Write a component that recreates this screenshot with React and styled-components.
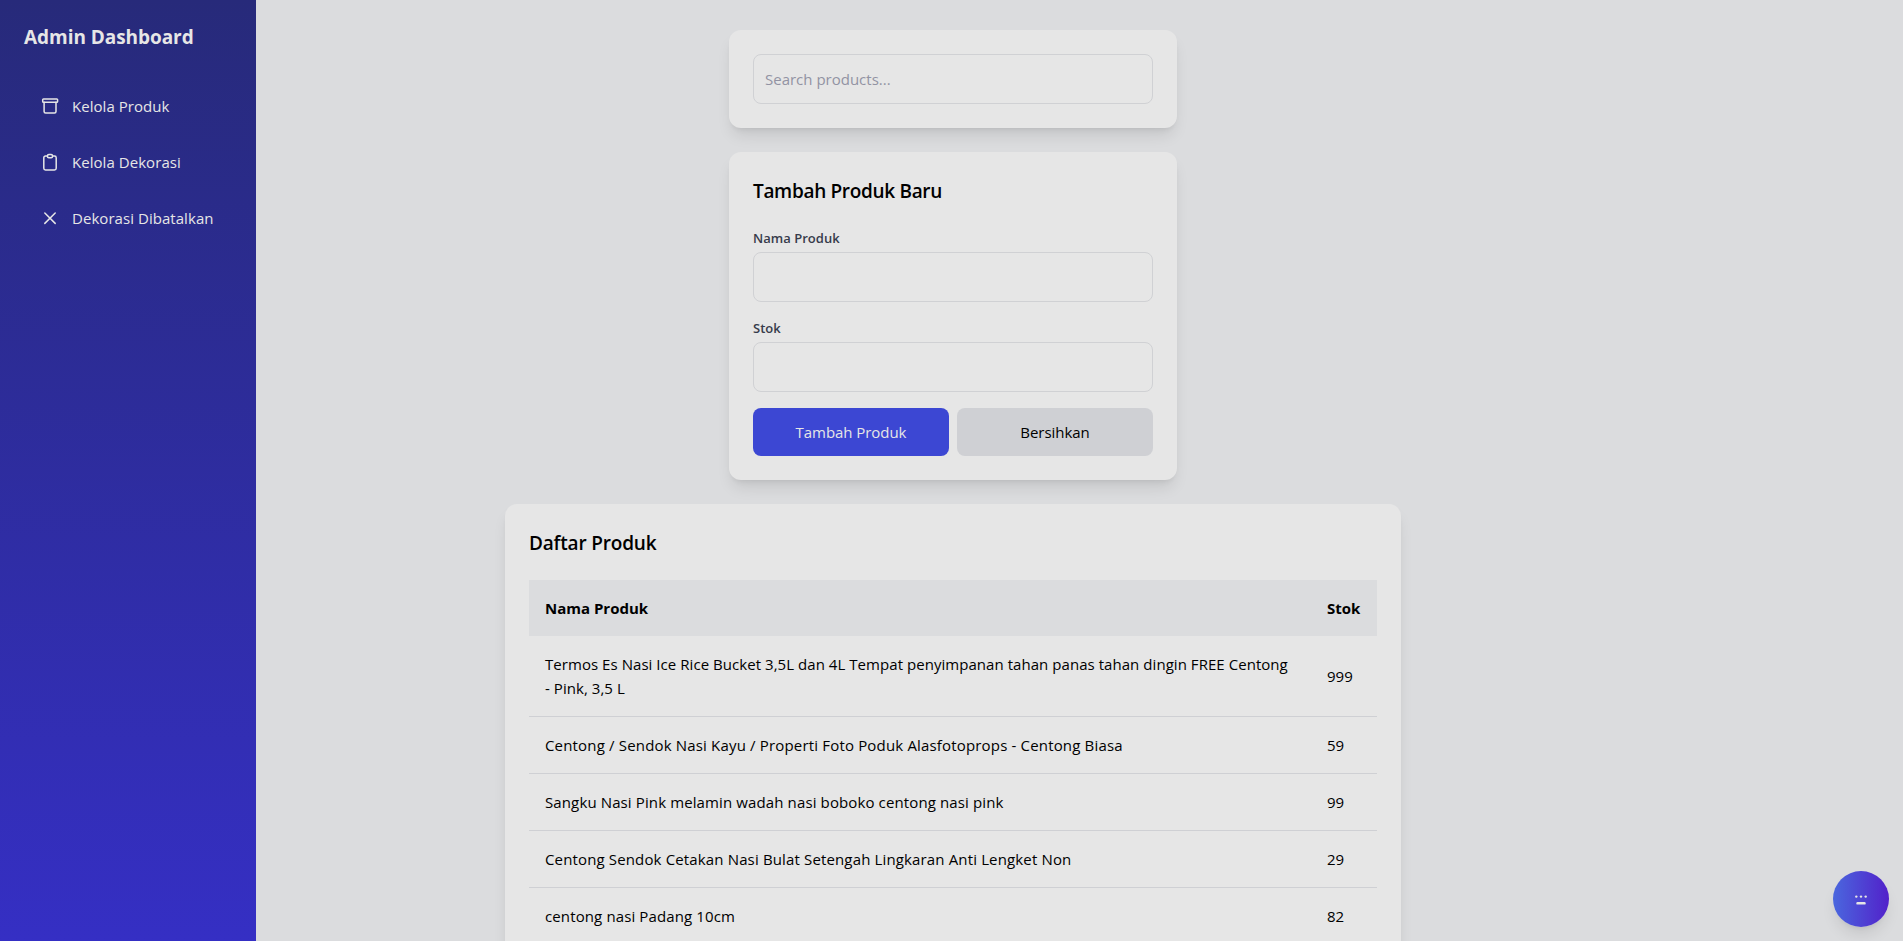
import React from "react";
import styled, { createGlobalStyle } from "styled-components";

const Global = createGlobalStyle`
  *, *::before, *::after { box-sizing: border-box; }
  html, body { margin: 0; height: 100%; overflow: hidden; }
  body {
    font-family: "Open Sans", "Noto Sans", sans-serif;
    font-size: 15px;
    line-height: 24px;
    color: #000;
    background: #dbdcde;
  }
  h1, h2 { margin: 0; }
`;

const Layout = styled.div`
  display: flex;
  height: 100vh;
  overflow: hidden;
`;

const Sidebar = styled.aside`
  flex: none;
  width: 256px;
  padding: 23px 24px;
  color: #e6e6e6;
  background: linear-gradient(to bottom, #272a7a, #352fc4);
`;

const Brand = styled.h1`
  font-size: 19px;
  line-height: 28px;
  font-weight: 700;
  letter-spacing: -0.05px;
  white-space: nowrap;
`;

const Nav = styled.nav`
  display: flex;
  flex-direction: column;
  margin-top: 27px;
`;

const NavItem = styled.a`
  display: flex;
  align-items: center;
  gap: 12px;
  padding: 16px;
  letter-spacing: 0.05px;
  white-space: nowrap;
`;

const NavIcon = styled.svg`
  flex: none;
  display: block;
  width: 20px;
  height: 20px;
`;

const Main = styled.main`
  flex: 1;
  display: flex;
  flex-direction: column;
  align-items: center;
  gap: 24px;
  padding: 30px 253px 0 0;
`;

const Card = styled.section`
  flex: none;
  width: ${(p) => (p.$wide ? 896 : 448)}px;
  padding: 24px;
  border-radius: 12px;
  background: #e6e6e6;
  box-shadow: 0 10px 15px -3px rgba(0, 0, 0, 0.1), 0 4px 6px -4px rgba(0, 0, 0, 0.1);
`;

const Heading = styled.h2`
  padding-top: 1px;
  margin-bottom: 23px;
  font-size: 19px;
  line-height: 28px;
  font-weight: 600;
  letter-spacing: ${(p) => p.$track || 0}px;
`;

const Form = styled.form`
  display: flex;
  flex-direction: column;
  gap: 16px;
`;

const Label = styled.label`
  display: block;
  font-size: 13px;
  line-height: 20px;
  font-weight: 600;
  letter-spacing: 0.03px;
  color: #373b4b;
`;

const Input = styled.input`
  display: block;
  width: 100%;
  height: 50px;
  margin-top: ${(p) => (p.$labelled ? 4 : 0)}px;
  padding: 12px 11px;
  border: 1px solid #d0d1d4;
  border-radius: 8px;
  background: transparent;
  font: inherit;
  outline: none;
  &::placeholder { color: #9293a3; opacity: 1; }
`;

const Actions = styled.div`
  display: grid;
  grid-template-columns: 1fr 1fr;
  gap: 8px;
`;

const Button = styled.button`
  height: 48px;
  padding: 0;
  border: 0;
  border-radius: 8px;
  font: inherit;
  letter-spacing: -0.05px;
  color: ${(p) => (p.$primary ? "#e6e6e6" : "#000")};
  background: ${(p) => (p.$primary ? "#3c47d3" : "#cfd0d4")};
`;

const Table = styled.table`
  width: 100%;
  table-layout: fixed;
  border-collapse: separate;
  border-spacing: 0;
`;

const HeadCell = styled.th`
  width: ${(p) => (p.$stock ? "66px" : "auto")};
  padding: 16px;
  text-align: left;
  font-weight: 700;
  background: #dbdcde;
`;

const Cell = styled.td`
  padding: 16px;
  border-bottom: 1px solid #cfd0d4;
  vertical-align: middle;
  letter-spacing: ${(p) => p.$track || 0}px;
`;

const ChatButton = styled.button`
  position: fixed;
  right: 14px;
  bottom: 14px;
  width: 56px;
  height: 56px;
  padding: 0;
  display: grid;
  place-items: center;
  border: 0;
  border-radius: 50%;
  background: linear-gradient(to right, #4a67de, #5221ca);
  box-shadow: 0 10px 15px -3px rgba(0, 0, 0, 0.1), 0 4px 6px -4px rgba(0, 0, 0, 0.1);
`;

const Icon = ({ children }) => (
  <NavIcon viewBox="0 0 20 20" fill="none" stroke="currentColor" strokeWidth="1.5" strokeLinecap="round" strokeLinejoin="round">
    {children}
  </NavIcon>
);

const products = [
  { name: "Termos Es Nasi Ice Rice Bucket 3,5L dan 4L Tempat penyimpanan tahan panas tahan dingin FREE Centong -\u00a0Pink, 3,5 L", stock: 999, track: 0.05 },
  { name: "Centong / Sendok Nasi Kayu / Properti Foto Poduk Alasfotoprops - Centong Biasa", stock: 59, track: 0.17 },
  { name: "Sangku Nasi Pink melamin wadah nasi boboko centong nasi pink", stock: 99, track: 0.12 },
  { name: "Centong Sendok Cetakan Nasi Bulat Setengah Lingkaran Anti Lengket Non", stock: 29, track: 0.145 },
  { name: "centong nasi Padang 10cm", stock: 82, track: 0.12 },
];

export default function App() {
  return (
    <>
      <Global />
      <Layout>
        <Sidebar>
          <Brand>Admin Dashboard</Brand>
          <Nav>
            <NavItem>
              <Icon>
                <rect x="2.7" y="3" width="14.9" height="3.3" rx="0.8" />
                <path d="M4.1 6.3v9.2a1.5 1.5 0 0 0 1.5 1.5h8.9a1.5 1.5 0 0 0 1.5-1.5V6.3" />
              </Icon>
              Kelola Produk
            </NavItem>
            <NavItem>
              <Icon>
                <path d="M7.5 4.1h-2a1.7 1.7 0 0 0-1.7 1.7v10.5A1.7 1.7 0 0 0 5.5 18h9a1.7 1.7 0 0 0 1.7-1.7V5.8a1.7 1.7 0 0 0-1.7-1.7h-2" />
                <rect x="7.5" y="2.4" width="5" height="3.3" rx="1.3" />
              </Icon>
              Kelola Dekorasi
            </NavItem>
            <NavItem>
              <Icon><path d="M4.8 5 15.2 15.4M15.2 5 4.8 15.4" /></Icon>
              Dekorasi Dibatalkan
            </NavItem>
          </Nav>
        </Sidebar>
        <Main>
          <Card><Input placeholder="Search products..." /></Card>
          <Card>
            <Heading $track={-0.32}>Tambah Produk Baru</Heading>
            <Form>
              <Label>Nama Produk<Input $labelled /></Label>
              <Label>Stok<Input $labelled /></Label>
              <Actions>
                <Button type="button" $primary>Tambah Produk</Button>
                <Button type="button">Bersihkan</Button>
              </Actions>
            </Form>
          </Card>
          <Card $wide>
            <Heading $track={-0.18}>Daftar Produk</Heading>
            <Table>
              <thead><tr><HeadCell>Nama Produk</HeadCell><HeadCell $stock>Stok</HeadCell></tr></thead>
              <tbody>
                {products.map(({ name, stock, track }) => (
                  <tr key={name}><Cell $track={track}>{name}</Cell><Cell>{stock}</Cell></tr>
                ))}
              </tbody>
            </Table>
          </Card>
        </Main>
      </Layout>
      <ChatButton aria-label="Chat">
        <svg width="14" height="12" viewBox="0 0 14 12" fill="#e6e6e6">
          <circle cx="2.3" cy="3.6" r="1.2" /><circle cx="7" cy="3.6" r="1.2" /><circle cx="11.7" cy="3.6" r="1.2" />
          <rect x="2.3" y="9" width="9.4" height="2.6" rx="1.2" />
        </svg>
      </ChatButton>
    </>
  );
}
